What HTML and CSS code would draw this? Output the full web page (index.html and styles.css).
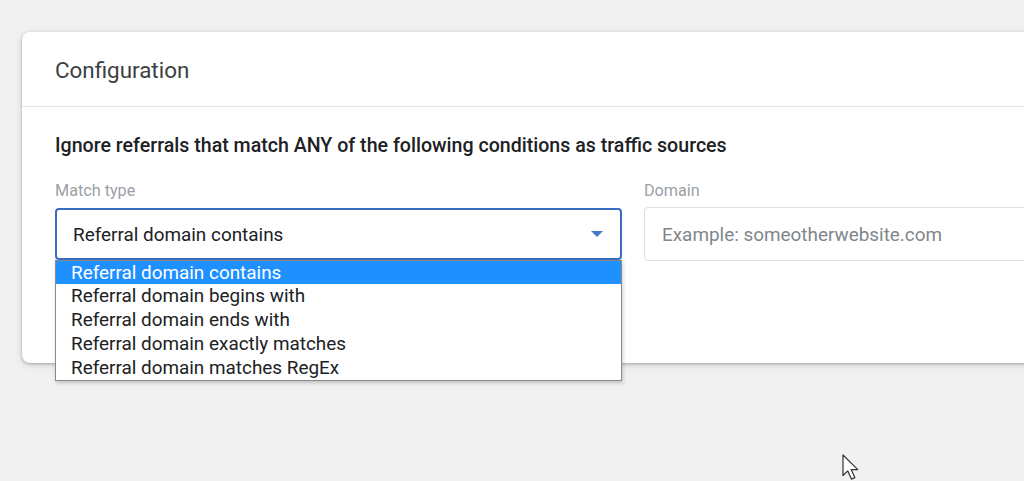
FILE: index.html
```html
<!DOCTYPE html>
<html>
<head>
<meta charset="utf-8">
<link rel="stylesheet" href="styles.css">
</head>
<body>
<div class="page">
  <div class="card">
    <div class="card-header">Configuration</div>
    <div class="card-body">
      <p class="intro">Ignore referrals that match ANY of the following conditions as traffic sources</p>
      <div class="fields">
        <div class="field match">
          <div class="label">Match type</div>
          <div class="select">
            <span>Referral domain contains</span>
            <svg class="arrow" width="12" height="6" viewBox="0 0 12 6"><path d="M0 0h12L6 6z" fill="#4a76c8"/></svg>
          </div>
          <ul class="options">
            <li class="selected">Referral domain contains</li>
            <li>Referral domain begins with</li>
            <li>Referral domain ends with</li>
            <li>Referral domain exactly matches</li>
            <li>Referral domain matches RegEx</li>
          </ul>
        </div>
        <div class="field domain">
          <div class="label">Domain</div>
          <div class="input">Example: someotherwebsite.com</div>
        </div>
      </div>
    </div>
  </div>
  <svg class="cursor" width="17" height="26" viewBox="0 0 17 26"><path d="M1 1v20.5l4.8-4.6 3.6 8.2 3.4-1.5-3.6-8h6.6z" fill="#fff" stroke="#333" stroke-width="1.2" stroke-linejoin="round"/></svg>
</div>
</body>
</html>
```

FILE: styles.css
```css
html, body {
  margin: 0;
  padding: 0;
  background: #f1f1f1;
  overflow: hidden;
  font-family: Roboto, "Liberation Sans", Arial, sans-serif;
}
.page {
  position: relative;
  width: 1024px;
  height: 481px;
  padding: 32px 0 0 22px;
  box-sizing: border-box;
}
.card {
  width: 1100px;
  height: 331px;
  background: #fff;
  border-radius: 8px;
  box-shadow: 0 1px 3px rgba(0,0,0,0.25), 0 2px 8px rgba(0,0,0,0.12);
}
.card-header {
  height: 75px;
  box-sizing: border-box;
  padding: 25px 0 0 33px;
  font-size: 22.4px;
  line-height: 26px;
  color: #3c4043;
  border-bottom: 1px solid #e3e3e3;
}
.card-body {
  padding: 27px 0 0 33px;
}
.intro {
  margin: 0;
  font-size: 19.6px;
  font-weight: 500;
  color: #202124;
  line-height: 24px;
}
.fields {
  display: flex;
  gap: 22px;
  margin-top: 23px;
}
.field {
  position: relative;
}
.match {
  width: 567px;
}
.domain {
  flex: 1;
}
.label {
  font-size: 16.2px;
  color: #9aa0a6;
  line-height: 20px;
  margin-bottom: 7px;
}
.select {
  height: 52px;
  box-sizing: border-box;
  border: 2px solid #3c6cc2;
  border-radius: 4px;
  display: flex;
  align-items: center;
  justify-content: space-between;
  padding: 0 17px 0 16px;
  font-size: 18.9px;
  color: #202124;
}
.input {
  height: 54px;
  margin-top: -1px;
  box-sizing: border-box;
  border: 1px solid #e0e0e0;
  border-radius: 4px;
  display: flex;
  align-items: center;
  padding-left: 17px;
  font-size: 18.9px;
  color: #80868b;
}
.options {
  position: absolute;
  left: 0;
  top: 79px;
  width: 567px;
  box-sizing: border-box;
  margin: 0;
  padding: 0;
  list-style: none;
  background: #fff;
  border: 1px solid #8a8a8a;
  box-shadow: 1px 2px 4px rgba(0,0,0,0.2);
  z-index: 2;
}
.options li {
  height: 24px;
  line-height: 24px;
  padding-left: 15px;
  font-size: 18.9px;
  color: #202124;
}
.options li:first-child {
  height: 23px;
}
.options li.selected {
  background: #1e90ff;
  color: #fff;
}
.cursor {
  position: absolute;
  left: 842px;
  top: 454px;
}
```
